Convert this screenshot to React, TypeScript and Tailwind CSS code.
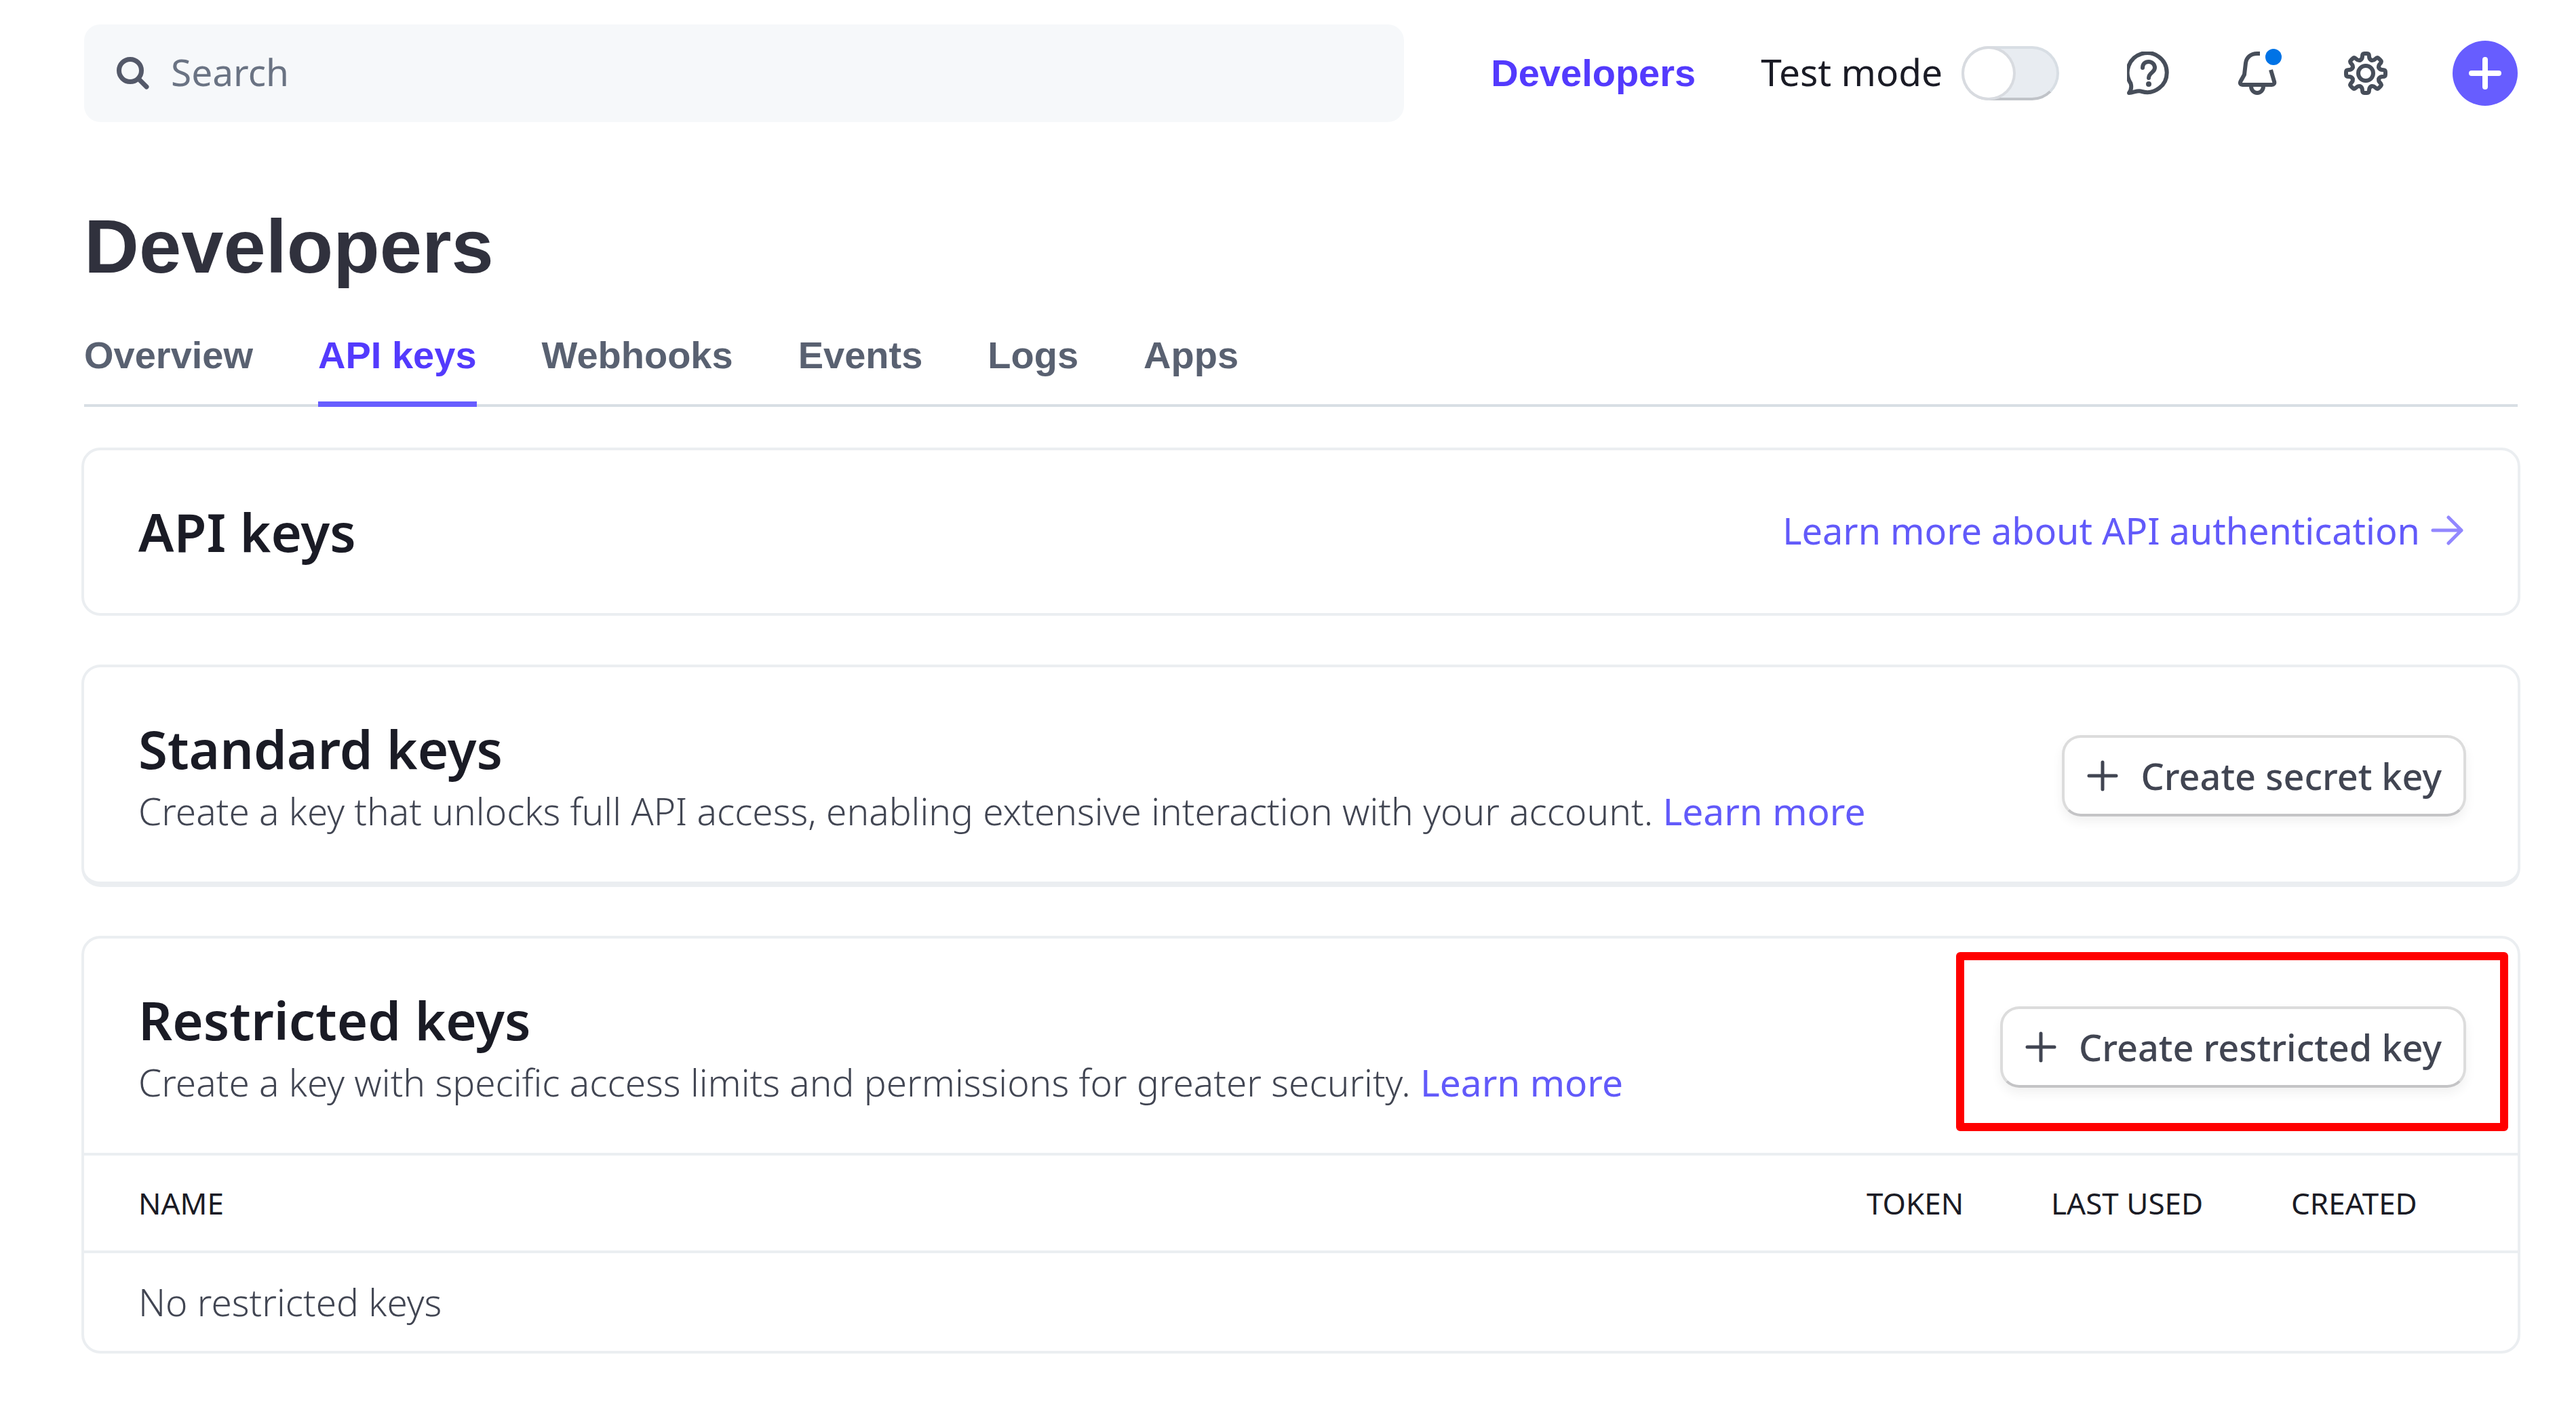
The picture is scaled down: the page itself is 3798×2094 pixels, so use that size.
import { useState } from "react";

const noto = "font-['Noto_Sans',sans-serif]";
const liberation = "font-['Liberation_Sans',sans-serif]";

const tabs = ["Overview", "API keys", "Webhooks", "Events", "Logs", "Apps"];

function SearchIcon() {
  return (
    <svg viewBox="0 0 48 48" className="size-12 shrink-0" fill="none" stroke="#545969" strokeWidth="7" strokeLinecap="round" aria-hidden="true">
      <circle cx="20" cy="20" r="16.5" />
      <path d="M32.5 32.5 44 44" />
    </svg>
  );
}

function HelpIcon() {
  return (
    <svg viewBox="0 0 64 64" className="size-16" fill="none" stroke="#474e5a" strokeWidth="6" strokeLinecap="round" aria-hidden="true">
      <path d="M3 61c3-4 4-9 2.500-14A29 29 0 1 1 22 59c-6-3-12 2-19 2Z" strokeLinejoin="round" />
      <path d="M23 24c0-6 4-9 9-9s9 4 9 9c0 7-9 7-9 15" />
      <circle cx="32" cy="48" r="4" fill="#474e5a" stroke="none" />
    </svg>
  );
}

function BellIcon() {
  return (
    <svg viewBox="0 0 64 64" className="size-16" fill="none" stroke="#474e5a" strokeWidth="6" aria-hidden="true">
      <path d="M36 3h-4C22 3 16 9 15 17L13 34 7.500 44c-1.500 3 0 5 3 5h43c3 0 4.500-2 3.500-5L52 27" />
      <path d="M23 51c0 6 4 10 9 10s9-4 9-10" />
    </svg>
  );
}

function GearIcon() {
  const teeth = [0, 45, 90, 135, 180, 225, 270, 315];
  return (
    <svg viewBox="0 0 64 64" className="size-16" fill="none" stroke="#474e5a" strokeWidth="6" strokeLinecap="round" aria-hidden="true">
      {teeth.map((a) => (
        <path key={a} transform={`rotate(${a} 32 32)`} d="M24 12.600C26.500 11.500 27 9.500 27 7c0-3 1-4 3-4h4c2 0 3 1 3 4 0 2.500.5 4.500 3 5.600" />
      ))}
      <circle cx="32" cy="32" r="11" />
    </svg>
  );
}

function PlusIcon({ width }: { width: number }) {
  return (
    <svg viewBox="0 0 48 48" className="size-12 shrink-0" stroke="currentColor" strokeWidth={width} strokeLinecap="round" aria-hidden="true">
      <path d="M24 4v40M4 24h40" />
    </svg>
  );
}

function CreateButton({ children }: { children: string }) {
  return (
    <button type="button" className="mt-1 flex h-[120px] shrink-0 items-center gap-8 rounded-[28px] border-4 border-[#dcdcdc] border-b-[#c4c4c6] bg-white px-8 font-medium text-[#414552] shadow-[0_8px_16px_rgba(0,0,0,0.06)]">
      <PlusIcon width={5} />
      {children}
    </button>
  );
}

function KeysHeader({ title, text, action }: { title: string; text: string; action: string }) {
  return (
    <div className="flex items-center justify-between pr-[76px] pl-20">
      <div className="pt-19 pb-17">
        <h2 className="text-[78px] leading-[88px] font-semibold text-[#1a1b25]">{title}</h2>
        <p className="mt-3 text-[55px] leading-[72px] font-light text-[#414552]">
          {text} <a href="#" className="font-normal text-[#625afa]">Learn more</a>
        </p>
      </div>
      <CreateButton>{action}</CreateButton>
    </div>
  );
}

export default function App() {
  const [tab, setTab] = useState("API keys");
  return (
    <div className={`${noto} min-h-screen bg-white text-[54px] leading-[72px]`}>
      <header className="flex items-center gap-24 pt-9 pr-[86px] pl-[124px] text-[55px]">
        <label className="flex h-36 flex-1 items-center gap-8 rounded-3xl bg-[#f6f8fa] px-12">
          <SearchIcon />
          <input type="search" aria-label="Search" placeholder="Search" className="min-w-0 flex-1 bg-transparent pb-1 outline-none placeholder:text-[#6a7383]" />
        </label>
        <a href="#" className={`${liberation} ml-8 text-[56px] font-bold text-[#533afd]`}>Developers</a>
        <label className="mr-1 flex items-center gap-7 text-[#1a1b25]">
          <span className="pb-1">Test mode</span>
          <input type="checkbox" role="switch" className="peer sr-only" />
          <span className="flex h-20 w-36 rounded-full border-4 border-[#d8dee4] border-b-[#c0c3c8] bg-[#e8ecf1] peer-checked:justify-end">
            <span className="size-[72px] rounded-full bg-white shadow-[0_0_0_4px_#d8dbe0]" />
          </span>
        </label>
        <button type="button" aria-label="Help"><HelpIcon /></button>
        <button type="button" aria-label="Notifications" className="relative">
          <BellIcon />
          <span className="absolute -top-1 -right-1 size-6 rounded-full bg-[#0073e6]" />
        </button>
        <button type="button" aria-label="Settings"><GearIcon /></button>
        <button type="button" aria-label="Create" className="flex size-24 items-center justify-center rounded-full bg-[#675dff] text-white">
          <PlusIcon width={8} />
        </button>
      </header>

      <main className="pr-[82px] pl-[120px]">
        <div className={`${liberation} px-1 pt-[120px]`}>
          <h1 className="text-[112px] leading-[128px] font-bold text-[#30313d]">Developers</h1>
          <nav className="mt-14 flex gap-24 text-[56px] leading-[80px] font-bold text-[#596171] shadow-[inset_0_-4px_#d8dee4]">
            {tabs.map((t) => (
              <button
                key={t}
                type="button"
                onClick={() => setTab(t)}
                className={t === tab ? "border-b-8 border-[#675dff] pb-7 text-[#533afd]" : "border-b-8 border-transparent pb-7"}
              >
                {t}
              </button>
            ))}
          </nav>
        </div>

        <section className="mt-[60px] flex h-[248px] items-center justify-between rounded-[28px] border-4 border-[#ebeef1] pr-[76px] pl-20">
          <h2 className="text-[78px] leading-[88px] font-semibold text-[#1a1b25]">API keys</h2>
          <a href="#" className="flex items-center gap-4 pr-1 pb-1 text-[#625afa]">
            Learn more about API authentication
            <svg viewBox="0 0 48 48" className="size-12" fill="none" stroke="#9287ff" strokeWidth="5" strokeLinecap="round" strokeLinejoin="round" aria-hidden="true">
              <path d="M3 24h42M26 5l19 19-19 19" />
            </svg>
          </a>
        </section>

        <section className="mt-[72px] rounded-[28px] border-4 border-b-8 border-[#ebeef1]">
          <KeysHeader title="Standard keys" text="Create a key that unlocks full API access, enabling extensive interaction with your account." action="Create secret key" />
        </section>

        <section className="relative mt-[72px] rounded-[28px] border-4 border-[#ebeef1]">
          <KeysHeader title="Restricted keys" text="Create a key with specific access limits and permissions for greater security." action="Create restricted key" />
          <div className="pointer-events-none absolute top-5 right-3.5 h-[264px] w-[814px] rounded-md border-12 border-[#ff0000]" />
          <table className="w-full border-separate border-spacing-0 text-left">
            <thead className="text-[44px] text-[#1a1b25]">
              <tr>
                <th className="h-37 border-y-4 border-[#ebeef1] pl-20 font-normal">NAME</th>
                <th className="w-[272px] border-y-4 border-[#ebeef1] font-normal">TOKEN</th>
                <th className="w-[354px] border-y-4 border-[#ebeef1] font-normal">LAST USED</th>
                <th className="w-[334px] border-y-4 border-[#ebeef1] font-normal">CREATED</th>
              </tr>
            </thead>
            <tbody>
              <tr>
                <td colSpan={4} className="h-36 pl-20 text-[55px] font-light text-[#414552]">No restricted keys</td>
              </tr>
            </tbody>
          </table>
        </section>
      </main>
    </div>
  );
}
